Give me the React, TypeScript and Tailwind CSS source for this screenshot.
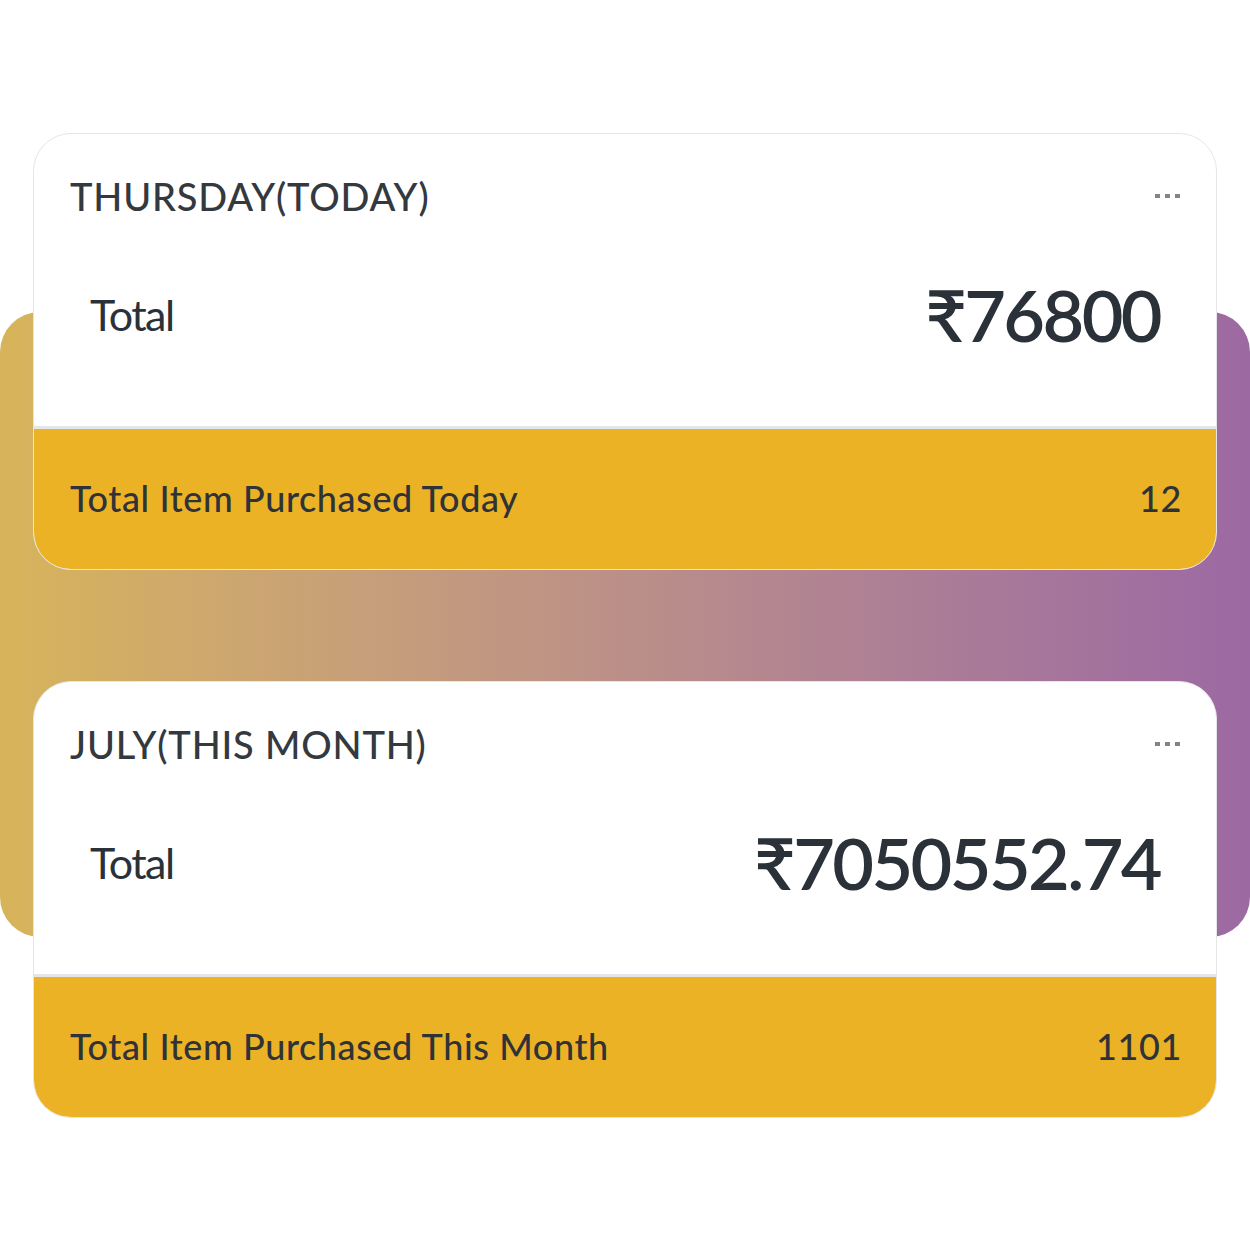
import React from "react";

interface StatCardProps {
  title: string;
  amount: string;
  footerLabel: string;
  footerValue: string;
}

function StatCard({ title, amount, footerLabel, footerValue }: StatCardProps) {
  return (
    <div className="relative z-10 flex flex-col overflow-hidden rounded-[38px] border border-[#e6e6e6] bg-white">
      {/* header */}
      <div className="flex h-[292px] flex-col px-[36px] pt-[38px]">
        <div className="flex items-center justify-between">
          <h3 className="text-[38px] leading-[48px] font-medium tracking-[0.8px] text-[#33393f]">{title}</h3>
          <div className="flex gap-[5px]">
            <span className="h-[4px] w-[5px] bg-[#80858c]" />
            <span className="h-[4px] w-[5px] bg-[#80858c]" />
            <span className="h-[4px] w-[5px] bg-[#80858c]" />
          </div>
        </div>
        <div className="mt-[58px] flex items-center justify-between pl-[20px] pr-[20px]">
          <span className="text-[43px] leading-none tracking-[-1.5px] text-[#2b3138]">Total</span>
          <span className="text-[72px] leading-none font-semibold tracking-[-2.6px] text-[#2b3138]">{amount}</span>
        </div>
      </div>
      <div className="h-[3px] bg-[#e3e7ec]" />
      {/* footer */}
      <div className="flex h-[140px] items-center justify-between bg-[#ecb226] pl-[36px] pr-[34px] pb-[2px]">
        <span className="text-[36px] leading-none font-medium tracking-[0.6px] text-[#2f3338]">{footerLabel}</span>
        <span className="text-[36px] leading-none font-medium tracking-[0.6px] text-[#2f3338]">{footerValue}</span>
      </div>
    </div>
  );
}

export default function App() {
  return (
    <div
      className="relative h-[1250px] w-[1250px] overflow-hidden bg-white"
      style={{ fontFamily: "Lato, 'Open Sans', sans-serif" }}
    >
      {/* gradient band behind cards */}
      <div className="absolute top-[312px] left-0 h-[625px] w-[1250px] rounded-[40px] bg-gradient-to-r from-[#d7b45a] via-[#bb8f89] to-[#9c69a2]" />

      <div className="flex flex-col gap-[111px] px-[33px] pt-[133px]">
        <StatCard
          title="THURSDAY(TODAY)"
          amount="₹76800"
          footerLabel="Total Item Purchased Today"
          footerValue="12"
        />
        <StatCard
          title="JULY(THIS MONTH)"
          amount="₹7050552.74"
          footerLabel="Total Item Purchased This Month"
          footerValue="1101"
        />
      </div>
    </div>
  );
}
